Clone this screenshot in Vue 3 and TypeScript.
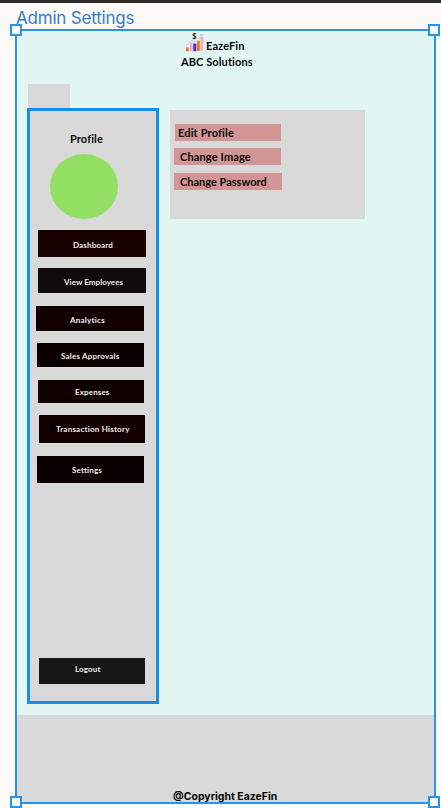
<script setup lang="ts">
interface Item {
  label: string
  name: string
}

const menu: Item[] = [
  { label: 'Dashboard', name: 'dashboard' },
  { label: 'View Employees', name: 'employees' },
  { label: 'Analytics', name: 'analytics' },
  { label: 'Sales Approvals', name: 'sales' },
  { label: 'Expenses', name: 'expenses' },
  { label: 'Transaction History', name: 'history' },
  { label: 'Settings', name: 'settings' },
  { label: 'Logout', name: 'logout' },
]

const actions: Item[] = [
  { label: 'Edit Profile', name: 'edit' },
  { label: 'Change Image', name: 'image' },
  { label: 'Change Password', name: 'password' },
]

const corners: string[] = ['tl', 'tr', 'bl', 'br']
</script>

<template>
  <div class="canvas">
    <div class="topbar"></div>
    <div class="title"><span>Admin Settings</span></div>
    <div class="frame">
      <header class="header">
        <div class="brand">
          <svg class="logo" width="20" height="20" viewBox="0 0 20 20">
            <rect x="1" y="14.5" width="2.8" height="3.8" fill="#f47a16" />
            <rect x="4.8" y="9.5" width="2.8" height="8.8" fill="#f3abc5" />
            <rect x="8.2" y="10.5" width="3.2" height="7.8" fill="#4638cf" />
            <rect x="12" y="7.8" width="2.8" height="10.2" fill="#fb7410" />
            <rect x="15.4" y="4" width="2.9" height="13.5" fill="#f5adc6" />
            <path d="M1 12.5 L6.5 7.5 L11 9 L17.2 1.5 M14.8 2 L17.2 1.5 L17.2 4" fill="none" stroke="#a9b9d8" stroke-width=".7" />
            <text class="dollar" x="7" y="6.3">$</text>
          </svg>
          <span class="brand-name">EazeFin</span>
        </div>
        <div class="company"><span>ABC Solutions</span></div>
      </header>
      <main class="main">
        <div class="left">
          <div class="tab"></div>
          <aside class="sidebar">
            <div class="profile"><span>Profile</span></div>
            <div class="avatar"></div>
            <nav class="menu">
              <button v-for="m in menu" :key="m.name" class="item" :class="m.name">
                <span>{{ m.label }}</span>
              </button>
            </nav>
          </aside>
        </div>
        <section class="panel">
          <button v-for="a in actions" :key="a.name" class="action" :class="a.name">
            <span>{{ a.label }}</span>
          </button>
        </section>
      </main>
      <footer class="footer"><span>@Copyright EazeFin</span></footer>
      <i v-for="c in corners" :key="c" class="handle" :class="c"></i>
    </div>
  </div>
</template>

<style>
body {
  background: #fffafa;
  overflow: hidden;
}
</style>

<style scoped>
.canvas {
  width: 441px;
  height: 808px;
  overflow: hidden;
  background: #fffafa;
  color: #080808;
  font-family: Lato, "Noto Sans", sans-serif;
  font-variant-ligatures: none;
}
.canvas * {
  box-sizing: border-box;
}
.canvas span {
  white-space: nowrap;
}
.topbar {
  height: 3px;
  background: #2f2d2e;
}
.title {
  height: 26px;
  padding: 5px 0 0 16px;
  font: 400 17px/21px Inter, sans-serif;
  letter-spacing: -0.2px;
  color: #327fc9;
}
.frame {
  position: relative;
  display: flex;
  flex-direction: column;
  width: 421px;
  height: 775px;
  margin-left: 15px;
  border: 2px solid #2495eb;
  background: #e2f7f4;
}
.header {
  height: 53px;
  flex: none;
}
.brand {
  display: flex;
  height: 22px;
  padding: 2px 0 0 168px;
}
.logo {
  overflow: visible;
}
.dollar {
  font: 700 8px Lato, sans-serif;
  fill: #222;
}
.brand-name {
  margin: 4px 0 0 1px;
  font-size: 11px;
  line-height: 18px;
  font-weight: 700;
  letter-spacing: 0.1px;
}
.company {
  padding-left: 164px;
  font-size: 11px;
  line-height: 18px;
  font-weight: 700;
  letter-spacing: 0.1px;
}
.main {
  display: flex;
  height: 631px;
  flex: none;
}
.left {
  width: 131px;
  margin-left: 10px;
}
.tab {
  width: 42px;
  height: 24px;
  margin-left: 1px;
  background: #d9d9d9;
}
.sidebar {
  width: 132px;
  height: 596px;
  border: 3px solid #138eec;
  background: #d9d9d9;
}
.profile {
  height: 43px;
  padding: 19px 0 0 40px;
  font-size: 11px;
  line-height: 18px;
  font-weight: 700;
  letter-spacing: 0.1px;
}
.avatar {
  width: 68px;
  height: 65px;
  margin-left: 20px;
  border-radius: 50%;
  background: #92df64;
}
.menu {
  display: flex;
  flex-direction: column;
  padding-top: 11px;
}
.item,
.action {
  display: flex;
  align-items: center;
  flex: none;
  padding: 0;
  border: 0;
  text-align: left;
  font-family: inherit;
}
.item {
  width: 107px;
  background: #100000;
  color: #f0ecec;
  font-size: 8px;
  line-height: 12px;
  font-weight: 700;
  letter-spacing: 0.14px;
}
.dashboard { width: 108px; height: 27px; margin-left: 8px; padding: 3px 0 0 35px; background: #180101; }
.employees { width: 108px; height: 25px; margin: 11px 0 0 8px; padding: 2px 0 0 26px; letter-spacing: 0.05px; background: #0f0a0b; }
.analytics { width: 108px; height: 25px; margin: 13px 0 0 6px; padding: 2px 0 0 34px; letter-spacing: 0.25px; }
.sales { height: 24px; margin: 12px 0 0 7px; padding: 2px 0 0 24px; letter-spacing: 0.2px; background: #0c0000; }
.expenses { width: 106px; height: 23px; margin: 13px 0 0 8px; padding: 1px 0 0 37px; }
.history { width: 106px; height: 28px; margin: 12px 0 0 9px; padding-left: 17px; letter-spacing: 0.22px; }
.settings { height: 27px; margin: 13px 0 0 7px; padding-left: 35px; background: #0c0000; }
.logout { width: 106px; height: 26px; margin: 175px 0 0 9px; padding: 0 0 4px 36px; background: #161616; }
.panel {
  width: 195px;
  height: 109px;
  margin: 26px 0 0 12px;
  padding: 14px 0 0 4px;
  background: #d9d9d9;
}
.action {
  width: 107px;
  height: 17px;
  background: #d09594;
  color: #0b0808;
  font-size: 11px;
  line-height: 17px;
  font-weight: 700;
}
.edit { width: 106px; margin-left: 1px; padding-left: 3px; letter-spacing: 0.15px; }
.image { margin-top: 7px; padding-left: 6px; letter-spacing: 0.15px; }
.password { width: 108px; margin-top: 8px; padding-left: 6px; }
.footer {
  flex: 1;
  padding: 77px 0 0 156px;
  background: #d9d9d9;
  font: 700 10.5px/10px Inter, sans-serif;
  color: #080808;
}
.handle {
  position: absolute;
  width: 12px;
  height: 12px;
  border: 2px solid #2495eb;
  background: #fff;
}
.tl { left: -7px; top: -7px; }
.tr { right: -6px; top: -7px; }
.bl { left: -7px; bottom: -6px; }
.br { right: -6px; bottom: -6px; }
</style>
